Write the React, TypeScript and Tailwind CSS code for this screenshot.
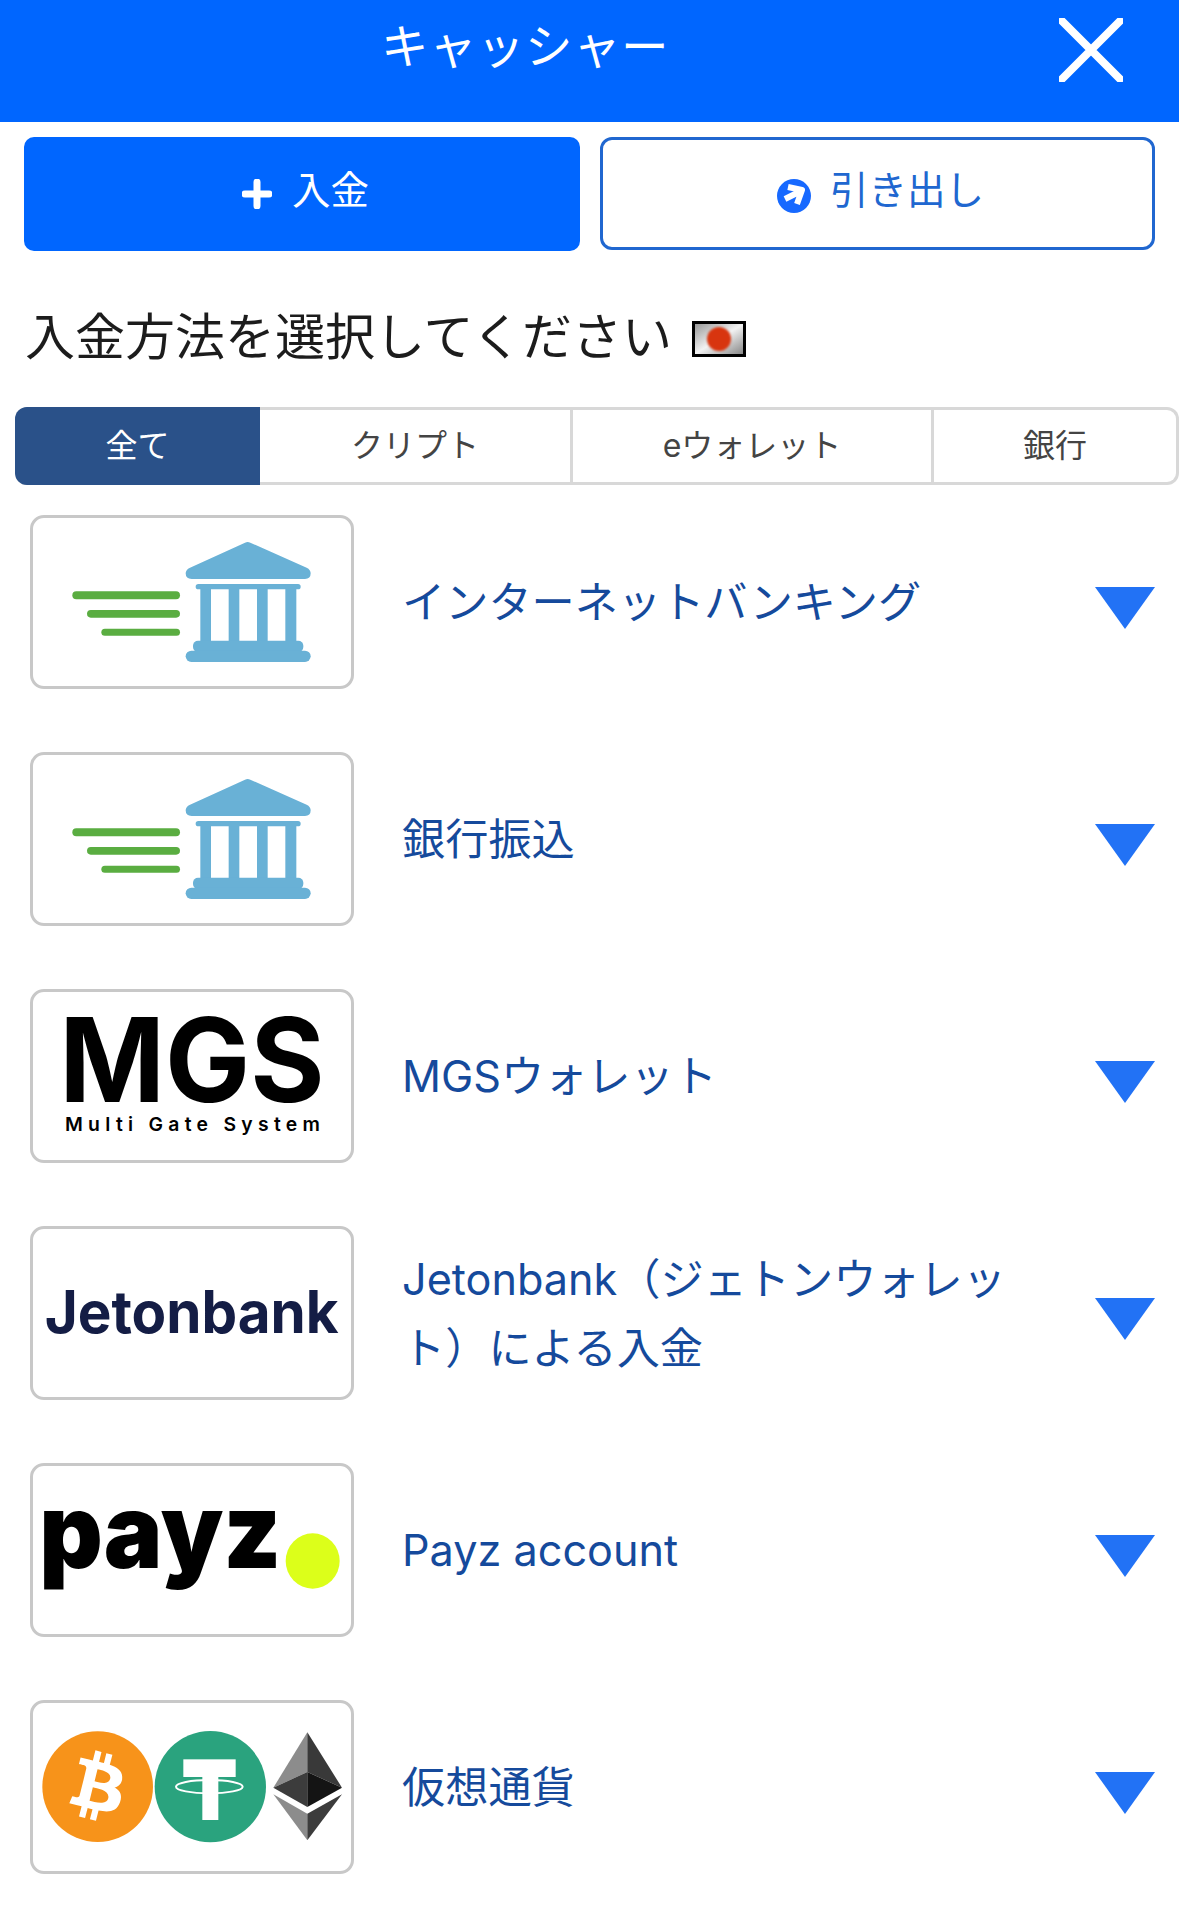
import React from 'react';

const BankLogo = () => (
  <svg viewBox="99 54 954 504" className="w-full h-full">
    <rect x="217" y="274" width="323" height="24" rx="12" fill="#5aad41" />
    <rect x="261" y="330" width="279" height="23" rx="11.5" fill="#5aad41" />
    <rect x="304" y="386" width="236" height="21" rx="10.5" fill="#5aad41" />
    <g fill="#69b1d6">
      <path d="M735 128 Q743 124 751 128 L920 203 Q932 209 932 220 Q932 237 915 237 H575 Q557 237 557 220 Q557 209 570 203 Z" />
      <rect x="587" y="252" width="315" height="16" rx="8" />
      <rect x="601" y="260" width="32" height="170" />
      <rect x="686" y="260" width="32" height="170" />
      <rect x="771" y="260" width="32" height="170" />
      <rect x="856" y="260" width="33" height="170" />
      <rect x="579" y="422" width="331" height="34" rx="15" />
      <rect x="557" y="452" width="375" height="34" rx="17" />
    </g>
  </svg>
);

const MgsLogo = () => (
  <svg viewBox="99 67 954 504" className="w-full h-full">
    <text x="178" y="397" fill="#000" fontFamily="Inter" fontWeight="700" fontSize="351" textLength="796" lengthAdjust="spacingAndGlyphs">MGS</text>
    <text x="195" y="483" fill="#000" fontFamily="Inter" fontWeight="600" fontSize="58" textLength="765">Multi Gate System</text>
  </svg>
);

const JetonLogo = () => (
  <svg viewBox="99 779 954 504" className="w-full h-full">
    <text x="134" y="1090" fill="#141d45" fontFamily="Inter" fontWeight="700" fontSize="176" textLength="882" lengthAdjust="spacingAndGlyphs">Jetonbank</text>
  </svg>
);

const PayzLogo = () => (
  <svg viewBox="99 79 954 504" className="w-full h-full">
    <text x="118" y="386" fill="#000" fontFamily="Inter" fontWeight="900" fontSize="312" textLength="726" lengthAdjust="spacingAndGlyphs">payz</text>
    <ellipse cx="938" cy="364" rx="81" ry="83" fill="#dcff1a" />
  </svg>
);

const CryptoLogo = () => (
  <svg viewBox="99 788 954 504" className="w-full h-full">
    <circle cx="293" cy="1039" r="166" fill="#f7931a" />
    <g transform="translate(127 873) scale(5.19)">
      <path
        fill="#fff"
        d="M46.1 27.4c.6-4.3-2.6-6.6-7.1-8.1l1.5-5.8-3.5-.9-1.4 5.7c-.9-.2-1.9-.4-2.8-.7l1.4-5.7-3.5-.9-1.5 5.8c-.8-.2-1.5-.3-2.2-.5l-4.9-1.2-.9 3.8s2.6.6 2.6.6c1.4.4 1.7 1.3 1.6 2l-1.6 6.6-2.3 9.2c-.2.4-.6 1.1-1.6.8 0 0-2.6-.6-2.6-.6l-1.7 4 4.6 1.2c.9.2 1.7.4 2.5.6l-1.5 5.9 3.5.9 1.5-5.8c1 .3 1.9.5 2.8.7l-1.5 5.8 3.5.9 1.5-5.9c6 1.1 10.5.7 12.4-4.8 1.5-4.4-.1-6.9-3.2-8.5 2.3-.5 4-2 4.5-5.1zM38.1 38.7c-1.1 4.4-8.4 2-10.8 1.4l1.9-7.8c2.4.6 10 1.8 8.9 6.4zm1.1-11.3c-1 4-7.1 2-9 1.5l1.7-7c2 .5 8.3 1.4 7.3 5.5z"
      />
    </g>
    <circle cx="631" cy="1039" r="167" fill="#2aa37e" />
    <rect x="550" y="957" width="157" height="53" fill="#fff" />
    <rect x="607" y="1005" width="48" height="134" fill="#fff" />
    <ellipse cx="628" cy="1039" rx="100" ry="20" fill="none" stroke="#fff" strokeWidth="6" />
    <polygon points="922,876 820,1042 922,995" fill="#8c8c8c" />
    <polygon points="922,876 1026,1042 922,995" fill="#393939" />
    <polygon points="820,1042 922,995 922,1100" fill="#3c3c3c" />
    <polygon points="1026,1042 922,995 922,1100" fill="#141414" />
    <polygon points="820,1062 922,1120 922,1200" fill="#8c8c8c" />
    <polygon points="1026,1062 922,1120 922,1200" fill="#3c3c3c" />
  </svg>
);

const methods = [
  { name: 'インターネットバンキング', logo: <BankLogo /> },
  { name: '銀行振込', logo: <BankLogo /> },
  { name: 'MGSウォレット', logo: <MgsLogo /> },
  { name: 'Jetonbank（ジェトンウォレット）による入金', logo: <JetonLogo /> },
  { name: 'Payz account', logo: <PayzLogo /> },
  { name: '仮想通貨', logo: <CryptoLogo /> },
];

export default function App() {
  return (
    <div className="w-[1179px] h-[1913px] bg-white overflow-hidden font-['Inter','Noto_Sans_CJK_JP',sans-serif]">
      <header className="h-[122px] bg-[#0066ff] flex justify-between pl-[381px] pr-[56px]">
        <h1 className="text-[47.5px] leading-[94px] text-white tracking-[0.5px] font-normal">キャッシャー</h1>
        <svg viewBox="0 0 64 64" className="w-[64px] h-[64px] mt-[18px]">
          <path d="M3 3 L61 61 M61 3 L3 61" stroke="#fff" strokeWidth="8" strokeLinecap="round" fill="none" />
        </svg>
      </header>

      <div className="flex gap-[20px] pl-[24px] mt-[15px]">
        <button className="w-[556px] h-[114px] bg-[#0066ff] rounded-[10px] flex items-center justify-center gap-[20px] pl-[7px] pb-[6px] text-white text-[38.5px]">
          <svg viewBox="0 0 30 30" className="w-[30px] h-[30px] mt-[6px]">
            <path d="M15 3 V27 M3 15 H27" stroke="#fff" strokeWidth="7" strokeLinecap="round" />
          </svg>
          入金
        </button>
        <button className="w-[555px] h-[113px] border-[3px] border-[#2067d0] rounded-[12px] flex items-center justify-center gap-[19px] pl-[6px] pb-[6px] text-[#2067d0] text-[38.5px]">
          <svg viewBox="0 0 34 34" className="w-[34px] h-[34px] mt-[10px]">
            <circle cx="17" cy="17" r="17" fill="#1769ff" />
            <path d="M11 8 L25 11 L20 25 M24 12 L8 20" fill="none" stroke="#fff" strokeWidth="6" strokeLinejoin="round" />
          </svg>
          引き出し
        </button>
      </div>

      <div className="h-[156px] pt-[16px] pl-[25px] flex items-center gap-[20px]">
        <h2 className="text-[50px] text-[#1c1c1c] font-normal">入金方法を選択してください</h2>
        <div className="w-[54px] h-[36px] border-[3px] border-black bg-linear-to-br from-[#999] via-[#f2f2f2] to-[#888] flex items-center justify-center mt-[3px]">
          <div className="w-[24px] h-[24px] rounded-full bg-[#d8350f] blur-[1px]"></div>
        </div>
      </div>

      <div className="ml-[15px] h-[78px] flex text-[32px] border-[3px] border-l-0 border-[#d8d8d8] rounded-[12px] text-[#444]">
        <div className="w-[245px] -my-[3px] bg-[#2a5189] text-white rounded-l-[12px] flex items-center justify-center">全て</div>
        <div className="w-[313px] border-r-[3px] border-[#d8d8d8] flex items-center justify-center">クリプト</div>
        <div className="w-[361px] border-r-[3px] border-[#d8d8d8] flex items-center justify-center">eウォレット</div>
        <div className="flex-1 flex items-center justify-center">銀行</div>
      </div>

      <div className="mt-[30px] flex flex-col gap-[63px]">
        {methods.map((m) => (
          <div key={m.name} className="h-[174px] flex items-center pl-[30px] pr-[24px]">
            <div className="w-[324px] h-[174px] shrink-0 border-[3px] border-[#c8c8c8] rounded-[14px] overflow-hidden">
              {m.logo}
            </div>
            <div className="ml-[48px] w-[612px] pt-[1px] text-[43.2px] leading-[69px] text-[#154a9c]">{m.name}</div>
            <svg viewBox="0 0 60 42" className="w-[60px] h-[42px] ml-auto mt-[11px]">
              <polygon points="0,0 60,0 30,42" fill="#2272f5" />
            </svg>
          </div>
        ))}
      </div>
    </div>
  );
}
